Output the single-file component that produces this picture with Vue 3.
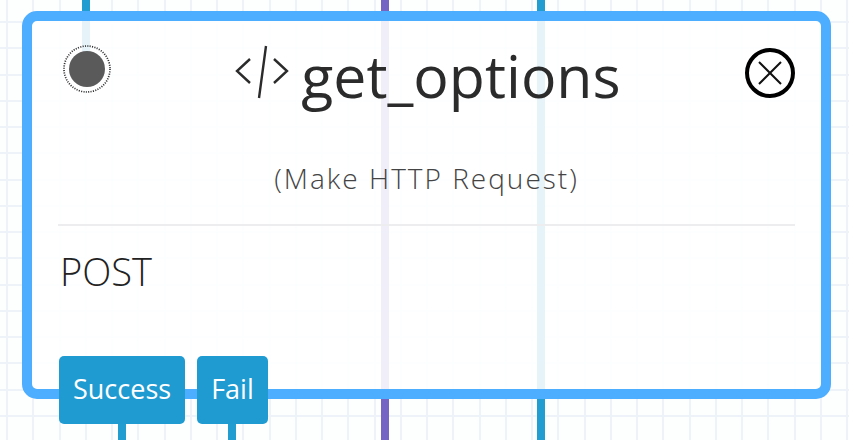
<script setup>
const step = 105 / 4
const columns = Array.from({ length: 80 }, (_, i) => Math.round(7 + i * step))
const rows = Array.from({ length: 40 }, (_, i) => Math.round(22 + i * step))
const incoming = [
  { x: 86, color: '#219dd1', end: '52' },
  { x: 385, color: '#7664c4', end: '100%' },
  { x: 541, color: '#219dd1', end: '100%' },
]
const outcomes = ['Success', 'Fail']
</script>

<template>
  <main class="canvas">
    <svg class="backdrop" aria-hidden="true">
      <g stroke="#eef3fa" stroke-width="2">
        <line v-for="x in columns" :key="'c' + x" :x1="x" :x2="x" y1="0" y2="100%" />
        <line v-for="y in rows" :key="'r' + y" x1="0" x2="100%" :y1="y" :y2="y" />
      </g>
      <line v-for="l in incoming" :key="l.x" :x1="l.x" :x2="l.x" y1="0" :y2="l.end" :stroke="l.color" stroke-width="8" />
    </svg>

    <article class="node">
      <header class="head">
        <svg class="port" viewBox="0 0 48 48" aria-hidden="true">
          <circle cx="24" cy="24" r="23" fill="none" stroke="#333" stroke-width="1.7" stroke-dasharray="1.1 1.3" />
          <circle cx="24" cy="24" r="18" fill="#5a5a5a" />
        </svg>
        <h1 class="title">
          <svg class="code" viewBox="0 0 54 54" aria-hidden="true">
            <path d="M15 14 2 26 15 38M39 14 52 26 39 38M31 1 24 53" />
          </svg>
          <span>get_options</span>
        </h1>
        <button class="close" type="button" aria-label="Close">
          <svg viewBox="0 0 24 24" aria-hidden="true"><path d="M1 1 23 23M23 1 1 23" /></svg>
        </button>
      </header>
      <p class="kind">(Make HTTP Request)</p>
      <p class="method">POST</p>
      <footer class="outcomes">
        <div v-for="o in outcomes" :key="o" class="outcome">
          <button type="button" class="tag">{{ o }}</button>
          <span class="stem"></span>
        </div>
      </footer>
    </article>
  </main>
</template>

<style>
body {
  margin: 0;
}
</style>

<style scoped>
.canvas {
  position: relative;
  box-sizing: border-box;
  min-height: 100vh;
  padding: 11px 18px 0 22px;
  background: #fdfefe;
  font-family: "Open Sans", "Noto Sans", sans-serif;
  color: #2b2b2b;
}
.backdrop {
  position: absolute;
  inset: 0;
  width: 100%;
  height: 100%;
}
.node {
  position: relative;
  padding: 24px 26px 0;
  border: 10px solid #4dadff;
  border-radius: 15px;
  background: rgba(255, 255, 255, 0.89);
  background-clip: padding-box;
}
.head {
  display: flex;
  justify-content: space-between;
  align-items: flex-start;
  padding-left: 5px;
}
.port {
  width: 48px;
  height: 48px;
}
.title {
  display: flex;
  gap: 12px;
  margin: 0;
  font-size: 59px;
  line-height: 60px;
  font-weight: 400;
}
.code {
  width: 54px;
  height: 54px;
  fill: none;
  stroke: #2b2b2b;
  stroke-width: 2.4;
}
.close {
  display: grid;
  place-items: center;
  box-sizing: border-box;
  width: 50px;
  height: 50px;
  margin-top: 3px;
  padding: 0;
  border: 4px solid #000;
  border-radius: 50%;
  background: #fff;
}
.close svg {
  width: 24px;
  height: 24px;
  stroke: #111;
  stroke-width: 2;
}
.kind {
  margin: 54px 0 0;
  padding-bottom: 27px;
  border-bottom: 2px solid #ededf0;
  font-size: 28px;
  line-height: 38px;
  font-weight: 300;
  letter-spacing: 2px;
  text-align: center;
  color: #444;
}
.method {
  margin: 20px 2px 0;
  font-size: 38px;
  line-height: 50px;
  font-weight: 300;
  color: #222;
}
.outcomes {
  display: flex;
  gap: 12px;
  height: 33px;
  margin: 60px 1px 0;
}
.outcome {
  display: flex;
  flex-direction: column;
  align-items: center;
}
.tag {
  flex: none;
  height: 68px;
  padding: 0 14px 2px;
  border: 0;
  border-radius: 5px;
  background: #1f9bd1;
  color: #fff;
  font: 400 27px/36px "Open Sans", "Noto Sans", sans-serif;
}
.stem {
  flex: none;
  width: 8px;
  height: 16px;
  background: #219dd1;
}
</style>
